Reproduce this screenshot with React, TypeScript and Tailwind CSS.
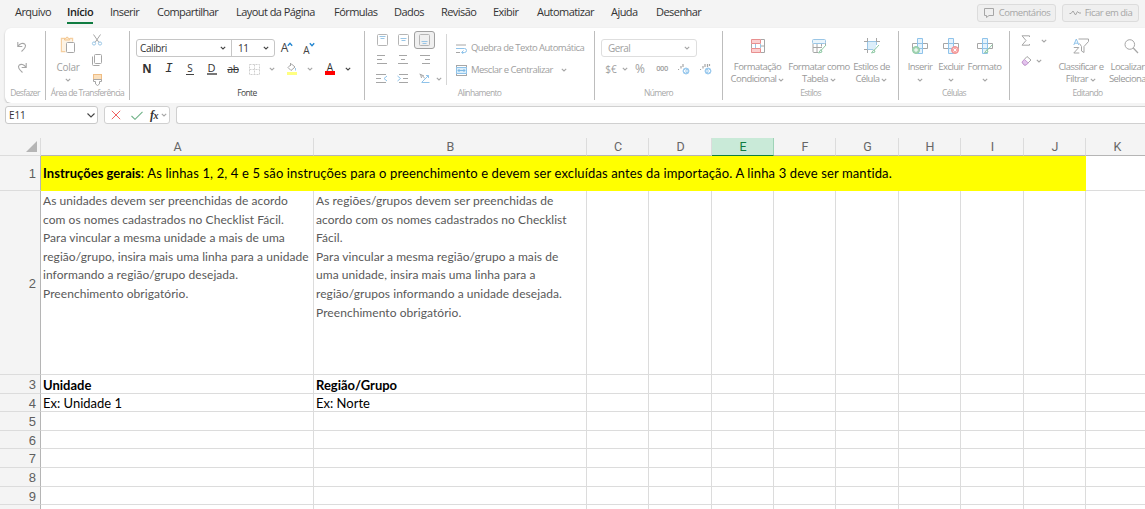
import React from "react";
import { clsx } from "clsx";

type IconProps = { children: React.ReactNode; w?: number; h?: number; className?: string };

const Icon = ({ children, w = 16, h = 16, className }: IconProps) => (
  <svg width={w} height={h} viewBox={`0 0 ${w} ${h}`} fill="none" stroke="#a6a6a6" className={clsx("shrink-0", className)}>
    {children}
  </svg>
);

const Chevron = ({ dark = false, className }: { dark?: boolean; className?: string }) => (
  <Icon w={6} h={4} className={className}>
    <path d="M0.8 0.8 3 3 5.2 0.8" stroke={dark ? "#444" : "#a6a6a6"} strokeWidth="1.1" />
  </Icon>
);

const Slot = ({ className, children }: { className: string; children?: React.ReactNode }) => (
  <div className={clsx("flex shrink-0 items-center justify-center whitespace-nowrap", className)}>{children}</div>
);

type GroupProps = { label: string; className: string; active?: boolean; last?: boolean; children: React.ReactNode };

const Group = ({ label, className, active, last, children }: GroupProps) => (
  <section className={clsx("mt-[3px] flex h-[69px] shrink-0 flex-col border-[#bdbdbd]", !last && "border-r", className)}>
    <div className="h-[56px]">{children}</div>
    <div
      className={clsx(
        "flex h-[12px] items-center justify-center whitespace-nowrap text-[8.5px] tracking-[-0.65px]",
        active ? "text-[#444]" : "text-[#a8a8a8]"
      )}
    >
      {label}
    </div>
  </section>
);

const tabs = [
  { name: "Arquivo", cls: "w-[52px]" },
  { name: "Início", cls: "w-[43px]" },
  { name: "Inserir", cls: "w-[47px]" },
  { name: "Compartilhar", cls: "w-[79px]" },
  { name: "Layout da Página", cls: "w-[98px]" },
  { name: "Fórmulas", cls: "w-[60px]" },
  { name: "Dados", cls: "w-[47px]" },
  { name: "Revisão", cls: "w-[52px]" },
  { name: "Exibir", cls: "w-[44px]" },
  { name: "Automatizar", cls: "w-[74px]" },
  { name: "Ajuda", cls: "w-[45px]" },
  { name: "Desenhar", cls: "w-[60px]" },
];

const Tabs = () => (
  <nav className="flex h-[28px] shrink-0 items-start bg-[#f4f4f4] pl-[15px]">
    {tabs.map((tab) => (
      <div key={tab.name} className={clsx("flex shrink-0 pt-[4px] text-[11px] leading-[16px] tracking-[-0.55px]", tab.cls)}>
        <span
          className={clsx(
            "h-[20px] whitespace-nowrap",
            tab.name === "Início" ? "border-b-2 border-[#107c41] font-semibold tracking-[-0.4px] text-[#222]" : "text-[#333]"
          )}
        >
          {tab.name}
        </span>
      </div>
    ))}
    <div className="ml-auto mr-[6px] mt-[4px] flex shrink-0 gap-[6px] text-[9.5px] tracking-[-0.5px] text-[#a6a6a6]">
      <button className="flex h-[18px] w-[79px] items-center justify-center gap-[4px] whitespace-nowrap rounded-[3px] border border-[#dcdcdc] bg-[#efefef]">
        <Icon w={12} h={12}>
          <path d="M1.5 1.5h9v7H6l-2.500 2v-2h-2z" />
        </Icon>
        Comentários
      </button>
      <button className="flex h-[18px] w-[77px] items-center justify-center gap-[4px] whitespace-nowrap rounded-[3px] border border-[#dcdcdc] bg-[#efefef]">
        <Icon w={12} h={8}>
          <path d="M0.5 4.5h1.5l2-2.500 2.500 4 2-3.500 1.500 1.500h2" />
        </Icon>
        Ficar em dia
      </button>
    </div>
  </nav>
);

const UndoGroup = () => (
  <Group label="Desfazer" className="w-[41px]">
    <div className="flex flex-col gap-[9px] pl-[11px] pt-[10px]">
      <Icon w={12} h={12}>
        <path d="M1.800 1v4.500h4.500M2 5.300C4 2.500 7 1.500 8.800 3.200c2 2-.3 4.500-3.300 7.300" strokeWidth="1.100" />
      </Icon>
      <Icon w={12} h={12}>
        <path d="M10.200 1v4.500H5.700M10 5.300C8 2.500 5 1.500 3.200 3.200c-2 2 .3 4.500 3.300 7.300" strokeWidth="1.100" />
      </Icon>
    </div>
  </Group>
);

const ClipboardGroup = () => (
  <Group label="Área de Transferência" className="w-[84px]">
    <div className="flex">
      <div className="ml-[7px] flex w-[30px] flex-col items-center pt-[5px]">
        <Icon w={16} h={18}>
          <path d="M5 2.500H1.500v13h4M10 2.500h2.500v3" stroke="#f5cfa0" strokeWidth="1.400" />
          <path d="M2.200 3.200h9.600v3H6v8.600H2.200z" fill="#fdf3e4" stroke="none" />
          <path d="M4.500 4V2.500h1.300a1.300 1.300 0 0 1 2.600 0h1.300V4z" stroke="#f3c58d" fill="#fde9cf" />
          <rect x="6.500" y="6.500" width="8" height="10" rx="1" fill="#fff" />
        </Icon>
        <span className="mt-[6px] text-[10px] leading-[14px] tracking-[-0.3px] text-[#a0a0a0]">Colar</span>
        <Chevron className="mt-[4px]" />
      </div>
      <div className="ml-[8px] flex w-[12px] flex-col items-center gap-[8px] pt-[3px]">
        <Icon w={12} h={12}>
          <path d="M2.500.5 8 8.500M9.500.5 4 8.500" />
          <circle cx="3" cy="9.500" r="1.600" stroke="#9ac6e6" />
          <circle cx="9" cy="9.500" r="1.600" stroke="#9ac6e6" />
        </Icon>
        <Icon w={12} h={12}>
          <rect x="3.500" y=".5" width="7" height="9" rx="1" />
          <path d="M1.500 2.500v8q0 1 1 1h6" />
        </Icon>
        <Icon w={12} h={12}>
          <rect x="2.500" y=".5" width="8" height="5" fill="#fbe0bd" stroke="#efbd84" />
          <path d="M2.500 5.500h8v2H8.500v2.500l-2 1.500-2-1.500V7.500h-2z" />
        </Icon>
      </div>
    </div>
  </Group>
);

const FontGroup = () => (
  <Group label="Fonte" className="w-[235px]" active>
    <div className="flex h-[26px] items-center pl-[6px] pt-[8px]">
      <div className="flex h-[18px] w-[139px] rounded-[3px] border border-[#c6c6c6] text-[10px] text-[#333]">
        <div className="flex w-[95px] items-center justify-between border-r border-[#c6c6c6] pl-[3px] pr-[5px] tracking-[-0.4px]">
          Calibri
          <Chevron dark />
        </div>
        <div className="flex flex-1 items-center justify-between pl-[6px] pr-[5px] tracking-[-0.4px]">
          11
          <Chevron dark />
        </div>
      </div>
      <Slot className="ml-[6px] w-[12px]">
        <span className="text-[12px] leading-[16px] text-[#444]">A</span>
        <Icon w={6} h={5} className="mb-[8px] -ml-px">
          <path d="M.8 3.800 3 1.300l2.200 2.500" stroke="#2185d0" strokeWidth="1.300" />
        </Icon>
      </Slot>
      <Slot className="ml-[10px] w-[12px]">
        <span className="mt-[3px] text-[10px] leading-[14px] text-[#444]">A</span>
        <Icon w={6} h={5} className="mb-[8px] -ml-px">
          <path d="M.8 1.200 3 3.700l2.200-2.500" stroke="#2185d0" strokeWidth="1.300" />
        </Icon>
      </Slot>
    </div>
    <div className="mt-[2px] flex h-[20px] items-center pl-[6px] text-[11px] leading-[12px] text-[#333]">
      <Slot className="w-[22px]">
        <span className="text-[11.5px] font-bold">N</span>
      </Slot>
      <Slot className="w-[22px]">
        <span className="font-['Liberation_Mono'] text-[13px] italic">I</span>
      </Slot>
      <Slot className="w-[20px]">
        <span className="h-[11px] w-[8px] border-b border-[#444] text-center text-[10px] leading-[9px]">S</span>
      </Slot>
      <Slot className="w-[23px]">
        <span className="h-[12px] w-[10px] border-b-2 border-[#777] text-center text-[11px] leading-[10px]">D</span>
      </Slot>
      <Slot className="w-[20px]">
        <span className="text-[10.500px] tracking-[-0.5px] line-through">ab</span>
      </Slot>
      <Slot className="w-[22px]">
        <Icon w={11} h={11}>
          <path d="M.5.500h10v10H.5zM5.500.500v10M.5 5.500h10" strokeDasharray="2 1" stroke="#cfcfcf" />
        </Icon>
      </Slot>
      <Slot className="w-[13px]">
        <Chevron />
      </Slot>
      <Slot className="w-[28px]">
        <Icon w={10} h={12}>
          <path d="M4.500 1 1 4.500l3 3L8 4zM3.500 0v3" />
          <path d="M8.500 5v2.500" stroke="#9ac6e6" />
          <path d="M0 10.500h10" stroke="#ffff80" strokeWidth="3" />
        </Icon>
      </Slot>
      <Slot className="w-[7px]">
        <Chevron />
      </Slot>
      <Slot className="ml-[3px] w-[28px] flex-col">
        <span className="h-[7px] text-[10px] leading-[7px]">A</span>
        <span className="h-[4px] w-[10px] bg-[#ff0000]" />
      </Slot>
      <Slot className="w-[8px]">
        <Chevron dark />
      </Slot>
    </div>
  </Group>
);

const VAlign = ({ y }: { y: number }) => (
  <Icon w={11} h={12}>
    <rect x=".5" y=".5" width="10" height="11" rx="1" stroke="#b5b5b5" />
    <path d={`M2.500 ${y}h6M3.500 ${y + 2}h4`} stroke="#9ac6e6" />
  </Icon>
);

const AlignGroup = () => (
  <Group label="Alinhamento" className="w-[230px]">
    <div className="flex">
      <div className="ml-[7px] w-[74px]">
        <div className="flex h-[18px] items-center">
          <Slot className="w-[20px]"><VAlign y={2.5} /></Slot>
          <Slot className="w-[22px]"><VAlign y={4.5} /></Slot>
          <Slot className="h-[18px] w-[21px] rounded-[3px] border border-[#a0a0a0] bg-[#f0f0f0]"><VAlign y={7.5} /></Slot>
        </div>
        <div className="flex h-[21px] items-center">
          <Slot className="w-[20px]">
            <Icon w={10} h={9}><path d="M0 .5h8M0 4.500h5M0 8.500h10" /></Icon>
          </Slot>
          <Slot className="w-[22px]">
            <Icon w={10} h={9}><path d="M1 .5h8M3 4.500h4M0 8.500h10" /></Icon>
          </Slot>
          <Slot className="w-[21px]">
            <Icon w={10} h={9}><path d="M0 .5h10M5 4.500h5M2 8.500h8" /></Icon>
          </Slot>
        </div>
        <div className="flex h-[17px] items-center">
          <Slot className="w-[20px]">
            <Icon w={12} h={9}>
              <path d="M0 .5h10M0 4.500h5M0 8.500h10" />
              <path d="M11 2 8 4.500 11 7" stroke="#8fc3ea" />
            </Icon>
          </Slot>
          <Slot className="w-[22px]">
            <Icon w={12} h={9}>
              <path d="M2 .5h9M6 4.500h5M2 8.500h9" />
              <path d="M.5 2l3 2.500-3 2.500" stroke="#8fc3ea" />
            </Icon>
          </Slot>
          <Slot className="w-[21px]">
            <Icon w={11} h={11}>
              <path d="M.5 1 5 3M1.500 1l1 4M3 2.500l3 3" />
              <path d="M2.500 9.500h8M3 9 9.500 2.500M9.500 5V2.500H7" stroke="#8fc3ea" />
            </Icon>
          </Slot>
          <Slot className="w-[7px]"><Chevron /></Slot>
        </div>
      </div>
      <div className="mt-[3px] h-[51px] w-px shrink-0 bg-[#d6d6d6]" />
      <div className="pl-[9px] pt-[8px] text-[9.5px] text-[#a0a0a0]">
        <div className="flex h-[19px] items-center gap-[5px] whitespace-nowrap">
          <Icon w={11} h={10} className="-mr-px">
            <path d="M0 1h10M0 8.500h4" />
            <path d="M0 4.500h8.500q2 0 2 2t-2 2H6M7.500 6.500 5.500 8.500l2 1.500" stroke="#8fc3ea" />
          </Icon>
          <span className="tracking-[-0.54px]">Quebra de Texto Automática</span>
        </div>
        <div className="mt-[2px] flex h-[20px] items-center gap-[5px] whitespace-nowrap">
          <Icon w={11} h={11} className="-mr-px">
            <rect x=".5" y=".5" width="10" height="10" />
            <path d="M.5 2.500h10v6H.5z" stroke="#8fc3ea" fill="#dceefa" />
            <path d="M2 5.500h7M3.500 4 2 5.500 3.500 7M7.500 4 9 5.500 7.500 7" stroke="#7fb9e3" />
          </Icon>
          <span className="tracking-[-0.52px]">Mesclar e Centralizar</span>
          <Chevron className="ml-[3px]" />
        </div>
      </div>
    </div>
  </Group>
);

const Decimals = ({ wide }: { wide?: boolean }) => (
  <Icon w={12} h={12}>
    <path d={wide ? "M.5 7v-1M3 5.500V3M5 4V1M7.500 4V1M9.500 3V1" : "M.5 7v-1M3 5.500V3M5 4V1"} strokeWidth="1.200" />
    <circle cx="8" cy="8" r="3" fill="#9dcbee" stroke="#9dcbee" />
    <path d={wide ? "M6 8h4M8.300 6.300 10 8 8.300 9.700" : "M10 8H6M7.700 6.300 6 8l1.700 1.700"} stroke="#fff" />
  </Icon>
);

const NumberGroup = () => (
  <Group label="Número" className="w-[128px]">
    <div className="pl-[6px] pt-[8px] text-[10px] text-[#a0a0a0]">
      <div className="flex h-[18px] w-[96px] items-center justify-between rounded-[3px] border border-[#dedede] pl-[6px] pr-[6px] tracking-[-0.55px]">
        Geral
        <Chevron />
      </div>
      <div className="mt-[2px] flex h-[20px] items-center">
        <Slot className="w-[20px]">$€</Slot>
        <Slot className="w-[7px]"><Chevron /></Slot>
        <Slot className="w-[24px] text-[12px]">%</Slot>
        <Slot className="w-[20px] text-[7.500px] font-semibold tracking-[-0.4px]">000</Slot>
        <Slot className="w-[24px]"><Decimals /></Slot>
        <Slot className="w-[19px]"><Decimals wide /></Slot>
      </div>
    </div>
  </Group>
);

type BigButtonProps = { icon: React.ReactNode; lines: string[]; className: string; arrow?: boolean };

const BigButton = ({ icon, lines, className, arrow = true }: BigButtonProps) => (
  <div className={clsx("flex shrink-0 flex-col items-center pt-[7px] text-[9.5px] tracking-[-0.54px] text-[#999]", className)}>
    {icon}
    <span className="mt-[7px] whitespace-nowrap leading-[12px]">{lines[0]}</span>
    <span className="flex h-[12px] items-center gap-[2px] whitespace-nowrap leading-[12px]">
      {lines[1]}
      {arrow && <Chevron className="mt-[2px]" />}
    </span>
  </div>
);

const StylesGroup = () => (
  <Group label="Estilos" className="w-[176px]">
    <div className="flex">
      <BigButton
        className="ml-[4px] w-[61px]"
        lines={["Formatação", "Condicional"]}
        icon={
          <Icon>
            <path d="M10.500 1.500h4v13h-4M1.500 5.500v5M10.500 8h4" />
            <path d="M5.500 6v4M10.500 6v4" stroke="#9ac6e6" />
            <path d="M1.500 1.500h9v4h-9zM1.500 10.500h9v4h-9z" stroke="#e88f8f" fill="#fbd0d0" />
          </Icon>
        }
      />
      <BigButton
        className="w-[62px]"
        lines={["Formatar como", "Tabela"]}
        icon={
          <Icon>
            <path d="M2 5.500v8q0 1 1 1h4M2 9.500h9M6 5.500v9M10.500 5.500v3M14.500 5v2" />
            <rect x="1.500" y="1.500" width="13" height="4" rx="1" stroke="#9ac6e6" fill="#eaf5fc" />
            <path d="M15 7l-5 5.500M10 11.500l-2.500 3.500 3.500-1z" stroke="#8fc9a4" />
          </Icon>
        }
      />
      <BigButton
        className="w-[43px]"
        lines={["Estilos de", "Célula"]}
        icon={
          <Icon>
            <rect x="4" y="4" width="8" height="7" fill="#dceefa" stroke="none" />
            <path d="M3.500 0v15M12.500 0v6M0 3.500h16M0 11.500h9" />
            <path d="M4 3.500h8M3.500 4v7.500M12.500 4v3M4 11.500h5" stroke="#9ac6e6" />
            <path d="M15 7l-5 5.500M10 11.500l-2.500 3.500 3.500-1z" stroke="#8fc9a4" />
          </Icon>
        }
      />
    </div>
  </Group>
);

const CellCross = ({ children }: { children: React.ReactNode }) => (
  <Icon>
    <path d="M.5 5.500h15v5H.5z" />
    <path d="M5.500.500h5v15h-5z" stroke="#8fc3ea" fill="#e6f3fc" />
    <path d="M5.500 5.500h5v5h-5z" stroke="#8fc3ea" />
    {children}
  </Icon>
);

const CellsGroup = () => (
  <Group label="Células" className="w-[111px]">
    <div className="flex">
      <BigButton
        className="ml-[6px] w-[30px]"
        lines={["Inserir", ""]}
        icon={
          <CellCross>
            <circle cx="4" cy="12" r="3.500" stroke="#8fc9a4" fill="#a9d8b8" />
            <path d="M2 12h4M4 10v4" stroke="#fff" />
          </CellCross>
        }
      />
      <BigButton
        className="w-[32px]"
        lines={["Excluir", ""]}
        icon={
          <CellCross>
            <circle cx="12" cy="12" r="3.500" stroke="#f08f8f" fill="#f7a8a8" />
            <path d="M10.500 10.500l3 3M13.500 10.500l-3 3" stroke="#fff" />
          </CellCross>
        }
      />
      <BigButton
        className="w-[35px]"
        lines={["Formato", ""]}
        icon={
          <CellCross>
            <path d="M15.500 6.500l-5.500 6M10 11.500l-2.500 3.500 3.500-1z" stroke="#8fc9a4" fill="#fff" />
          </CellCross>
        }
      />
    </div>
  </Group>
);

const EditGroup = () => (
  <Group label="Editando" className="w-[155px]" last>
    <div className="flex">
      <div className="ml-[8px] w-[38px] pt-[4px]">
        <div className="flex items-center gap-[11px] pl-[3px]">
          <Icon w={9} h={11}>
            <path d="M8.500 2V.800H1l4 4.700-4 4.700h7.500V9" />
          </Icon>
          <Chevron />
        </div>
        <div className="mt-[9px] flex items-center gap-[4px] pl-[3px]">
          <Icon w={11} h={11}>
            <path d="M1 7 6 1.500 10 5 5 10H3z" />
            <path d="M1 7 3.500 4.500 7.300 8 5 10H3z" stroke="#c99bd6" fill="#e3c4ec" />
          </Icon>
          <Chevron />
        </div>
      </div>
      <BigButton
        className="w-[50px]"
        lines={["Classificar e", "Filtrar"]}
        icon={
          <Icon>
            <path d="M.8 7 3.300 1l2.500 6M1.600 5.200h3.400" stroke="#8fc3ea" />
            <path d="M.8 9.500h5l-5 5.500h5.500" />
            <path d="M5.500 1h10v2.500L11 8.500v6L8.500 13V8.500L6.500 5.500" />
          </Icon>
        }
      />
      <BigButton
        className="ml-[2px] w-[39px]"
        arrow={false}
        lines={["Localizar", "Seleciona"]}
        icon={
          <Icon className="ml-[6px]">
            <circle cx="6.800" cy="6.500" r="4.800" />
            <path d="M10.300 10 15 15" strokeWidth="1.200" />
          </Icon>
        }
      />
    </div>
  </Group>
);

const FormulaBar = () => (
  <div className="flex h-[35px] shrink-0 gap-[6px] bg-[#f4f4f4] pl-[5px] pt-[3px]">
    <div className="flex h-[18px] w-[93px] items-center justify-between rounded-[3px] border border-[#c9c9c9] bg-white pl-[3px] pr-[2px] text-[10px] tracking-[-0.1px] text-[#333]">
      E11
      <Icon w={8} h={5}>
        <path d="M.5.500 4 4 7.500.500" stroke="#444" strokeWidth="1.100" />
      </Icon>
    </div>
    <div className="flex h-[18px] w-[66px] items-center rounded-[3px] border border-[#d0d0d0] bg-white">
      <Slot className="w-[22px]">
        <Icon w={10} h={10}>
          <path d="M.8.800 9.200 9.200M9.200.800.800 9.200" stroke="#ef6060" />
        </Icon>
      </Slot>
      <Slot className="w-[20px]">
        <Icon w={12} h={9}>
          <path d="M.5 5 4 8.300 11.500.800" stroke="#6fb287" strokeWidth="1.100" />
        </Icon>
      </Slot>
      <span className="w-[14px] text-center font-['Liberation_Serif'] text-[12px] font-semibold italic tracking-[-0.5px] text-[#333]">
        f<span className="text-[10px]">x</span>
      </span>
      <Chevron />
    </div>
    <div className="h-[18px] flex-1 rounded-l-[3px] border border-r-0 border-[#d0d0d0] bg-white" />
  </div>
);

const columns = [
  { name: "A", cls: "w-[273px]" },
  { name: "B", cls: "w-[273px]" },
  { name: "C", cls: "w-[62px]" },
  { name: "D", cls: "w-[63px]" },
  { name: "E", cls: "w-[62px]" },
  { name: "F", cls: "w-[62px]" },
  { name: "G", cls: "w-[63px]" },
  { name: "H", cls: "w-[62px]" },
  { name: "I", cls: "w-[63px]" },
  { name: "J", cls: "w-[62px]" },
  { name: "K", cls: "w-[63px]" },
];

const unitLines = [
  "As unidades devem ser preenchidas de acordo",
  "com os nomes cadastrados no Checklist Fácil.",
  "Para vincular a mesma unidade a mais de uma",
  "região/grupo, insira mais uma linha para a unidade",
  "informando a região/grupo desejada.",
  "Preenchimento obrigatório.",
];

const regionLines = [
  "As regiões/grupos devem ser preenchidas de",
  "acordo com os nomes cadastrados no Checklist",
  "Fácil.",
  "Para vincular a mesma região/grupo a mais de",
  "uma unidade, insira mais uma linha para a",
  "região/grupos informando a unidade desejada.",
  "Preenchimento obrigatório.",
];

const Lines = ({ lines }: { lines: string[] }) => (
  <div className="self-start pt-px text-[12px] leading-[18.600px] tracking-[0.060px] text-[#595959]">
    {lines.map((line) => (
      <div key={line}>{line}</div>
    ))}
  </div>
);

type RowType = { n?: number; cls: string; cells?: Record<string, React.ReactNode> };

const rows: RowType[] = [
  { n: 2, cls: "h-[184px]", cells: { A: <Lines lines={unitLines} />, B: <Lines lines={regionLines} /> } },
  { n: 3, cls: "h-[19px]", cells: { A: <b className="pt-[2px]">Unidade</b>, B: <b className="pt-[2px] tracking-[-0.03px]">Região/Grupo</b> } },
  { n: 4, cls: "h-[18px]", cells: { A: <span className="pt-[2px]">Ex: Unidade 1</span>, B: <span className="pt-[2px]">Ex: Norte</span> } },
  { n: 5, cls: "h-[19px]" },
  { n: 6, cls: "h-[18px]" },
  { n: 7, cls: "h-[19px]" },
  { n: 8, cls: "h-[19px]" },
  { n: 9, cls: "h-[18px]" },
];

const RowHead = ({ n }: { n?: number }) => (
  <div className="flex w-[41px] shrink-0 items-center justify-end border-b border-r border-b-[#dcdcdc] border-r-[#b5b5b5] bg-[#f4f4f4] pr-[4px] pt-[2px] font-['Liberation_Sans'] text-[13px] leading-[16px] text-[#5f5f5f]">
    {n}
  </div>
);

const Row = ({ n, cls, cells }: RowType) => (
  <div className={clsx("flex", cls)}>
    <RowHead n={n} />
    {columns.map((col) => (
      <div
        key={col.name}
        className={clsx("flex shrink-0 items-center whitespace-nowrap border-b border-r border-[#dcdcdc] pl-[2px] leading-[17px]", col.cls)}
      >
        {cells?.[col.name]}
      </div>
    ))}
  </div>
);

const Sheet = () => (
  <main className="w-[1189px] font-['Lato',sans-serif] text-[13px] text-black">
    <div className="flex h-[18px] bg-[#f4f4f4]">
      <div className="flex w-[41px] shrink-0 items-end justify-end border-b border-r border-[#dcdcdc] pb-[3px] pr-[3px]">
        <Icon w={11} h={11}>
          <path d="M11 0v11H0z" fill="#b5b5b5" stroke="none" />
        </Icon>
      </div>
      {columns.map(({ name, cls }) => (
        <div
          key={name}
          className={clsx(
            "flex shrink-0 items-center justify-center border-b border-r pl-px font-['Roboto'] text-[12.500px] leading-[16px]",
            name === "E"
              ? "border-b-[#107c41] border-r-[#9fd3b7] bg-[#c9ead8] text-[#107c41]"
              : "border-b-[#b5b5b5] border-r-[#dcdcdc] text-[#666]",
            cls
          )}
        >
          {name}
        </div>
      ))}
    </div>
    <div className="flex h-[35px]">
      <RowHead n={1} />
      <div className="flex w-[1045px] shrink-0 items-center whitespace-pre bg-[#ffff00] pl-[2px] pt-px">
        <b className="tracking-[0.03px]">Instruções gerais</b>
        <span className="tracking-[0.130px]">: As linhas 1, 2, 4 e 5 são instruções para o preenchimento e devem ser excluídas antes da importação. A linha 3 deve ser mantida.</span>
      </div>
      <div className="flex-1 border-b border-[#dcdcdc]" />
    </div>
    {rows.map((row) => (
      <Row key={row.n} {...row} />
    ))}
    <Row cls="h-[5px]" />
  </main>
);

const App = () => (
  <div className="flex h-[509px] w-[1145px] flex-col overflow-hidden bg-[#f4f4f4] font-['Open_Sans',sans-serif]">
    <Tabs />
    <div className="ml-[5px] flex h-[75px] shrink-0 rounded-l-[6px] bg-white shadow-[0_1px_2px_rgba(0,0,0,0.25)]">
      <UndoGroup />
      <ClipboardGroup />
      <FontGroup />
      <AlignGroup />
      <NumberGroup />
      <StylesGroup />
      <CellsGroup />
      <EditGroup />
    </div>
    <FormulaBar />
    <div className="bg-white">
      <Sheet />
    </div>
  </div>
);

export default App;
